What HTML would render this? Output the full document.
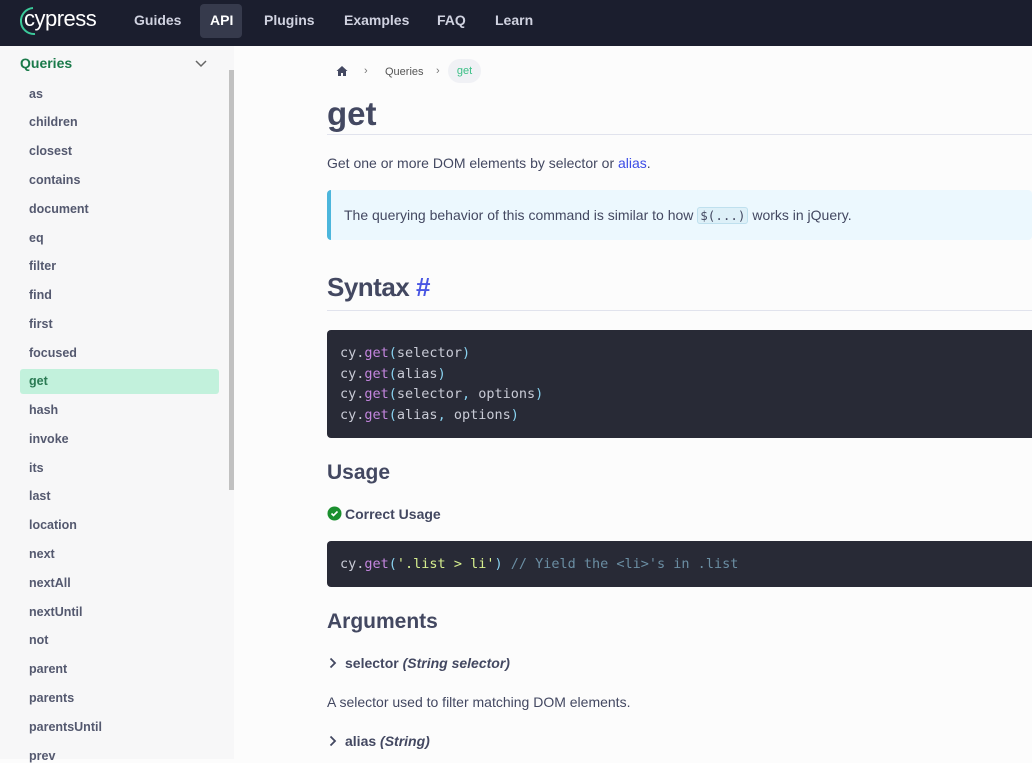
<!DOCTYPE html>
<html><head><meta charset="utf-8"><style>
*{box-sizing:border-box;margin:0;padding:0}
body{width:1032px;height:759px;overflow:hidden;background:#fcfcfc;font-family:"Liberation Sans",sans-serif;color:#434861;position:relative}
.nav{position:absolute;left:0;top:0;width:1032px;height:46px;background:#1b1e2e}
.nav .logo{position:absolute;left:24px;top:6px;color:#fff;font-size:22px;letter-spacing:-0.5px}
.nav a{position:absolute;top:12px;color:#d0d2e0;font-weight:bold;font-size:14px}
.nav .act{position:absolute;left:200px;top:4px;width:42px;height:34px;background:#363a4c;border-radius:4px}
.side{position:absolute;left:0;top:46px;width:234px;height:713px;background:#f7f7f8}
.sb{position:absolute;left:229px;top:70px;width:5px;height:420px;background:#c1c1c1}
.side .h{position:absolute;left:20px;top:9px;color:#1a7a4a;font-weight:bold;font-size:14px}
.it{position:absolute;left:29px;font-size:12.5px;color:#434861;font-weight:bold;opacity:.9}
.sel{position:absolute;left:20px;top:323px;width:199px;height:25px;background:#c2f1dc;border-radius:3px}
.main{position:absolute;left:327px}
.code{position:absolute;left:327px;width:710px;background:#282a36;border-radius:4px;font-family:"DejaVu Sans Mono","Liberation Mono",monospace;font-size:13.5px;color:#c9cbd6;line-height:20.5px;padding-left:13px}
.k{color:#c586e0}.p{color:#8ad3f0}.s{color:#d6ee8e}.c{color:#6b8ea3}
</style></head><body>
<div class="nav">
<svg style="position:absolute;left:19px;top:5px" width="30" height="32" viewBox="0 0 30 32"><path d="M14 3 A13 13 0 1 0 16 29" stroke="#3bc99a" stroke-width="2" fill="none"/></svg>
<div class="logo">cypress</div>
<div class="act"></div>
<a style="left:134px">Guides</a><a style="left:210px;color:#fff">API</a><a style="left:264px">Plugins</a><a style="left:344px">Examples</a><a style="left:437px">FAQ</a><a style="left:495px">Learn</a>
</div>
<div class="side">
<div class="h">Queries</div>
<svg style="position:absolute;left:195px;top:14px" width="12" height="8"><path d="M1 1l5 5 5-5" stroke="#666" stroke-width="1.5" fill="none"/></svg>
<div class="sel"></div>
</div>
<div class="sb"></div>
<div class="it" style="top:87px">as</div><div class="it" style="top:115px">children</div><div class="it" style="top:144px">closest</div><div class="it" style="top:173px">contains</div><div class="it" style="top:202px">document</div><div class="it" style="top:231px">eq</div><div class="it" style="top:259px">filter</div><div class="it" style="top:288px">find</div><div class="it" style="top:317px">first</div><div class="it" style="top:346px">focused</div><div class="it" style="top:374px;color:#1a6e45">get</div><div class="it" style="top:403px">hash</div><div class="it" style="top:432px">invoke</div><div class="it" style="top:461px">its</div><div class="it" style="top:489px">last</div><div class="it" style="top:518px">location</div><div class="it" style="top:547px">next</div><div class="it" style="top:576px">nextAll</div><div class="it" style="top:605px">nextUntil</div><div class="it" style="top:633px">not</div><div class="it" style="top:662px">parent</div><div class="it" style="top:691px">parents</div><div class="it" style="top:720px">parentsUntil</div><div class="it" style="top:749px">prev</div>

<svg style="position:absolute;left:336px;top:65px" width="12" height="12" viewBox="0 0 12 12"><path d="M6 1L0.5 6H2v5h3V8h2v3h3V6h1.5z" fill="#434861"/></svg>
<div style="position:absolute;left:364px;top:65px;font-size:11px;color:#777">›</div>
<div style="position:absolute;left:385px;top:66px;font-size:11px;color:#555">Queries</div>
<div style="position:absolute;left:436px;top:65px;font-size:11px;color:#777">›</div>
<div style="position:absolute;left:448px;top:59px;width:33px;height:24px;border-radius:12px;background:#f0f1f5;color:#3bbf86;font-size:11px;text-align:center;line-height:24px">get</div>
<div class="main" style="top:95px;font-size:33px;font-weight:bold;color:#434861">get</div>
<div style="position:absolute;left:327px;top:134px;width:705px;height:1px;background:#e1e3ed"></div>
<div class="main" style="top:155px;font-size:14px">Get one or more DOM elements by selector or <span style="color:#3c4ce6">alias</span>.</div>
<div style="position:absolute;left:327px;top:190px;width:705px;height:50px;background:#ecf8fe;border-left:4px solid #4cb6dc;border-radius:4px"></div>
<div class="main" style="left:344px;top:207px;font-size:14px">The querying behavior of this command is similar to how <span style="font-family:'DejaVu Sans Mono',monospace;font-size:12.5px;background:#ddf0f8;border:1px solid #bfe0ee;border-radius:3px;padding:0 2px">$(...)</span> works in jQuery.</div>
<div class="main" style="top:272px;font-size:26px;font-weight:bold;letter-spacing:-0.5px">Syntax <span style="color:#4956e3">#</span></div>
<div style="position:absolute;left:327px;top:310px;width:705px;height:1px;background:#e1e3ed"></div>
<div class="code" style="top:330px;height:108px;padding-top:13px">cy.<span class="k">get</span><span class="p">(</span>selector<span class="p">)</span><br>cy.<span class="k">get</span><span class="p">(</span>alias<span class="p">)</span><br>cy.<span class="k">get</span><span class="p">(</span>selector<span class="p">,</span> options<span class="p">)</span><br>cy.<span class="k">get</span><span class="p">(</span>alias<span class="p">,</span> options<span class="p">)</span></div>
<div class="main" style="top:461px;font-size:21px;font-weight:bold">Usage</div>
<svg style="position:absolute;left:327px;top:506px" width="15" height="15"><circle cx="7.5" cy="7.5" r="7" fill="#1a8f2e"/><path d="M4.5 7.5l2 2 4-4" stroke="#fff" stroke-width="1.6" fill="none"/></svg>
<div class="main" style="left:345px;top:506px;font-size:14px;font-weight:bold">Correct Usage</div>
<div class="code" style="top:541px;height:46px;padding-top:13px">cy.<span class="k">get</span><span class="p">(</span><span class="s">'.list &gt; li'</span><span class="p">)</span> <span class="c">// Yield the &lt;li&gt;'s in .list</span></div>
<div class="main" style="top:610px;font-size:21px;font-weight:bold">Arguments</div>
<svg style="position:absolute;left:329px;top:657px" width="8" height="12"><path d="M1.5 1.5l4.5 4.5-4.5 4.5" stroke="#434861" stroke-width="1.8" fill="none"/></svg>
<div class="main" style="left:345px;top:655px;font-size:14px;font-weight:bold">selector <i>(String selector)</i></div>
<div class="main" style="top:694px;font-size:14px">A selector used to filter matching DOM elements.</div>
<svg style="position:absolute;left:329px;top:735px" width="8" height="12"><path d="M1.5 1.5l4.5 4.5-4.5 4.5" stroke="#434861" stroke-width="1.8" fill="none"/></svg>
<div class="main" style="left:345px;top:733px;font-size:14px;font-weight:bold">alias <i>(String)</i></div>
</body></html>
